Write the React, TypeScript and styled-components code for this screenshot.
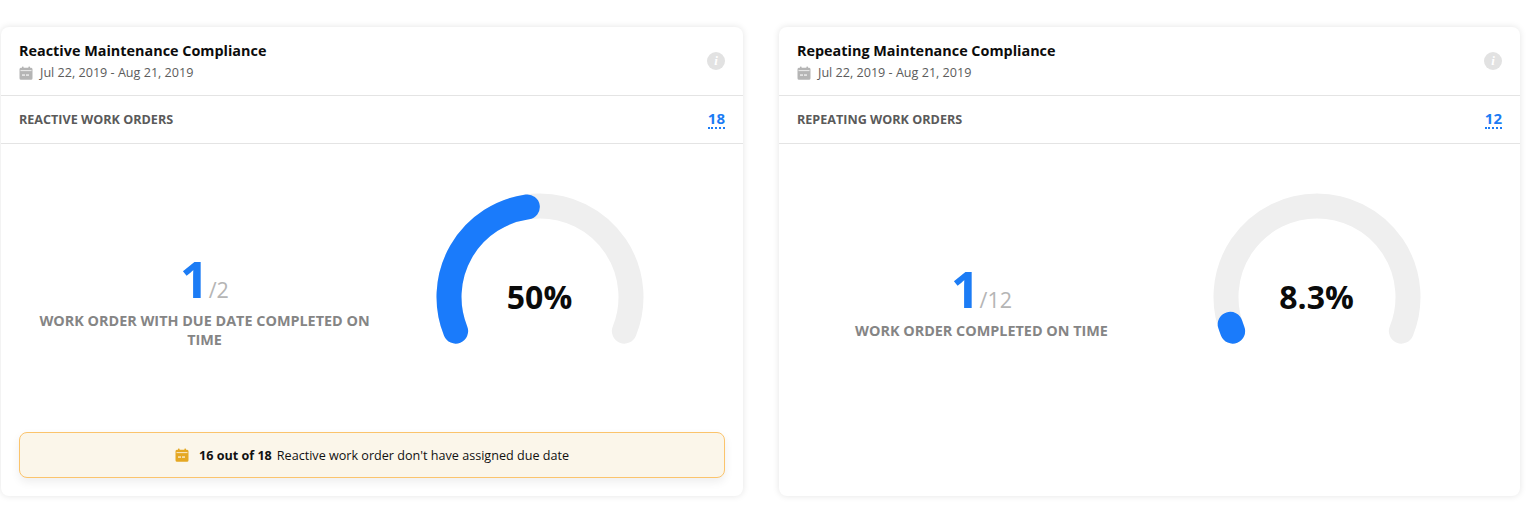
import React from "react";
import styled, { createGlobalStyle } from "styled-components";

const Global = createGlobalStyle`
  html, body { margin: 0; padding: 0; background: #fff; }
  body { font-family: "Open Sans", "Liberation Sans", sans-serif; }
`;

const Page = styled.div`
  display: grid;
  grid-template-columns: 742px 741px;
  gap: 36px;
  padding: 27px 0 0 1px;
  width: 1527px;
  height: 521px;
  box-sizing: border-box;
  align-items: start;
`;

const Card = styled.section`
  height: 469px;
  box-sizing: border-box;
  background: #fff;
  border-radius: 8px;
  box-shadow: 0 0 7px rgba(0, 0, 0, 0.11);
  display: flex;
  flex-direction: column;
`;

const Header = styled.header`
  height: 69px;
  box-sizing: border-box;
  padding: 14px 18px 0;
  border-bottom: 1px solid #e4e4e4;
  display: flex;
  justify-content: space-between;
`;

const Title = styled.h2`
  margin: 0;
  font-size: 14.4px;
  line-height: 20px;
  font-weight: 700;
  color: #0c0c0c;
`;

const DateRow = styled.div`
  display: flex;
  align-items: center;
  gap: 7px;
  margin-top: 2px;
  font-size: 12.6px;
  line-height: 20px;
  color: #5c5c5c;
`;

const InfoBadge = styled.span`
  width: 18px;
  height: 18px;
  margin-top: 11px;
  border-radius: 50%;
  background: #e2e2e2;
  color: #fff;
  font: italic 700 13px/18px "Liberation Serif", serif;
  text-align: center;
`;

const CountRow = styled.div`
  height: 48px;
  box-sizing: border-box;
  padding: 0 18px;
  border-bottom: 1px solid #e4e4e4;
  display: flex;
  align-items: center;
  justify-content: space-between;
`;

const CountLabel = styled.span`
  font-size: 12.6px;
  font-weight: 700;
  color: #5a5a5a;
`;

const CountLink = styled.a`
  font-size: 15px;
  line-height: 17px;
  margin-top: -1px;
  font-weight: 700;
  color: #1c7cf5;
  border-bottom: 2px dotted #1c7cf5;
`;

const Main = styled.div<{ $inset: number }>`
  height: 288px;
  box-sizing: border-box;
  padding: 19px 54px 0 ${(p) => p.$inset}px;
  display: grid;
  grid-template-columns: 371px 299px;
  align-items: center;
  justify-items: center;
`;

const Stat = styled.div`
  width: 345px;
  text-align: center;
  padding-top: 8px;
`;

const StatLine = styled.div`
  line-height: 50px;
  height: 50px;
`;

const Big = styled.span`
  font-size: 50px;
  font-weight: 700;
  color: #1c7cf5;
`;

const Denominator = styled.span`
  font-size: 21.5px;
  color: #b5b5b5;
`;

const StatLabel = styled.div`
  margin-top: 7px;
  font-size: 14.4px;
  line-height: 19px;
  font-weight: 700;
  color: #858585;
`;

const GaugeBox = styled.div`
  position: relative;
  width: 208px;
  height: 208px;
  margin-top: -2px;
`;

const GaugeValue = styled.div`
  position: absolute;
  inset: 0;
  display: flex;
  align-items: center;
  justify-content: center;
  font-size: 32px;
  font-weight: 700;
  color: #0b0b0b;
`;

const Banner = styled.div`
  margin: 0 18px;
  height: 46px;
  box-sizing: border-box;
  border: 1px solid #fbc46c;
  border-radius: 8px;
  background: #fbf6ea;
  box-shadow: 0 4px 10px rgba(0, 0, 0, 0.07);
  display: flex;
  align-items: center;
  justify-content: center;
  font-size: 12.6px;
  color: #111;
`;

const BannerStrong = styled.strong`
  margin: 0 5px 0 10px;
  font-weight: 700;
`;

const CalendarIcon = ({ color, size = 14 }: { color: string; size?: number }) => (
  <svg width={size} height={size} viewBox="0 0 14 14" aria-hidden="true">
    <rect x="3" y="0.5" width="1.6" height="3" rx="0.6" fill={color} />
    <rect x="9.4" y="0.5" width="1.6" height="3" rx="0.6" fill={color} />
    <path d="M2.2 1.8h10a1.5 1.5 0 0 1 1.3 1.5v9a1.5 1.5 0 0 1-1.5 1.5H2a1.5 1.5 0 0 1-1.5-1.5v-9a1.5 1.5 0 0 1 1.7-1.5z" fill={color} />
    <rect x="1.5" y="4.2" width="11" height="0.9" fill="#fff" opacity="0.85" />
    <rect x="3" y="8.5" width="3" height="1.1" fill="#fff" />
    <rect x="7" y="8.5" width="3" height="1.1" fill="#fff" />
  </svg>
);

const polar = (deg: number, r = 91) => {
  const a = (deg * Math.PI) / 180;
  return [104 + r * Math.cos(a), 104 - r * Math.sin(a)];
};

const arc = (from: number, to: number) => {
  const [x1, y1] = polar(from);
  const [x2, y2] = polar(to);
  return `M${x1.toFixed(2)} ${y1.toFixed(2)}A91 91 0 ${from - to > 180 ? 1 : 0} 1 ${x2.toFixed(2)} ${y2.toFixed(2)}`;
};

const Gauge = ({ end, value }: { end: number; value: string }) => (
  <GaugeBox>
    <svg width="208" height="208" viewBox="0 0 208 208" aria-hidden="true">
      <path d={arc(202, -22)} fill="none" stroke="#efefef" strokeWidth="25" strokeLinecap="round" />
      <path d={arc(202, end)} fill="none" stroke="#1a7bfb" strokeWidth="25" strokeLinecap="round" />
    </svg>
    <GaugeValue>{value}</GaugeValue>
  </GaugeBox>
);

type PanelProps = {
  title: string;
  countLabel: string;
  count: number;
  denominator: string;
  label: string;
  end: number;
  value: string;
  inset: number;
  banner?: boolean;
};

const Panel = ({ title, countLabel, count, denominator, label, end, value, inset, banner }: PanelProps) => (
  <Card>
    <Header>
      <div>
        <Title>{title}</Title>
        <DateRow>
          <CalendarIcon color="#b5b5b5" />
          Jul 22, 2019 - Aug 21, 2019
        </DateRow>
      </div>
      <InfoBadge>i</InfoBadge>
    </Header>
    <CountRow>
      <CountLabel>{countLabel}</CountLabel>
      <CountLink>{count}</CountLink>
    </CountRow>
    <Main $inset={inset}>
      <Stat>
        <StatLine>
          <Big>1</Big>
          <Denominator>{denominator}</Denominator>
        </StatLine>
        <StatLabel>{label}</StatLabel>
      </Stat>
      <Gauge end={end} value={value} />
    </Main>
    {banner && (
      <Banner>
        <CalendarIcon color="#e5a823" />
        <BannerStrong>16 out of 18</BannerStrong>
        Reactive work order don't have assigned due date
      </Banner>
    )}
  </Card>
);

export default function App() {
  return (
    <>
      <Global />
      <Page>
        <Panel
          title="Reactive Maintenance Compliance"
          countLabel="REACTIVE WORK ORDERS"
          count={18}
          denominator="/2"
          label="WORK ORDER WITH DUE DATE COMPLETED ON TIME"
          end={98}
          value="50%"
          inset={18}
          banner
        />
        <Panel
          title="Repeating Maintenance Compliance"
          countLabel="REPEATING WORK ORDERS"
          count={12}
          denominator="/12"
          label="WORK ORDER COMPLETED ON TIME"
          end={197.5}
          value="8.3%"
          inset={17}
        />
      </Page>
    </>
  );
}
